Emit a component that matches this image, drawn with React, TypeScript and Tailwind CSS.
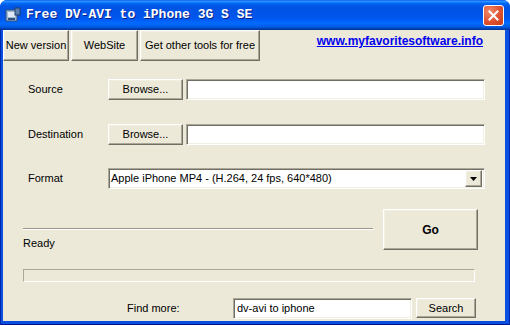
import type { ReactNode } from 'react';

// Classic XP-era 3D borders, reused on buttons and fields
const raised =
  'bg-[#ece9d8] border border-t-white border-l-white border-b-[#716f64] border-r-[#716f64] shadow-[inset_-1px_-1px_0_#aca899,inset_1px_1px_0_#f1efe2]';
const sunken =
  'bg-white border border-t-[#aca899] border-l-[#aca899] border-b-white border-r-white shadow-[inset_1px_1px_0_#716f64,inset_-1px_-1px_0_#f1efe2]';

function Btn({ className = '', children }: { className?: string; children: ReactNode }) {
  return (
    <button type="button" className={`${raised} flex items-center justify-center text-black ${className}`}>
      {children}
    </button>
  );
}

function TitleIcon() {
  return (
    <svg width="16" height="16" viewBox="0 0 16 16" className="shrink-0">
      <rect x="1" y="3" width="11" height="11" fill="#9fb8d8" stroke="#30507a" strokeWidth="1" />
      <rect x="3" y="5" width="7" height="5" fill="#dfe9f5" />
      <rect x="10" y="1" width="5" height="7" fill="#5b7fb0" stroke="#223f66" strokeWidth="1" />
      <rect x="3" y="11" width="7" height="2" fill="#30507a" />
    </svg>
  );
}

function CloseButton() {
  return (
    <div className="w-[21px] h-[21px] rounded-[3px] border border-white bg-[radial-gradient(circle_at_30%_30%,#f08a6c,#e0512f_55%,#c23b1c)] flex items-center justify-center">
      <svg width="11" height="11" viewBox="0 0 11 11">
        <path d="M1.5 1.5 L9.5 9.5 M9.5 1.5 L1.5 9.5" stroke="white" strokeWidth="2" strokeLinecap="square" />
      </svg>
    </div>
  );
}

export default function App() {
  return (
    <div className="w-[510px] h-[325px] flex flex-col bg-[#0a4fe0] rounded-t-[7px] overflow-hidden font-['Liberation_Sans',Arial,sans-serif] text-[11px] text-black">
      {/* title bar */}
      <div className="h-[30px] shrink-0 flex items-center pl-[5px] pr-[6px] bg-[linear-gradient(to_bottom,#0058ee_0%,#3593ff_4%,#288eff_6%,#127dff_8%,#036ffc_10%,#0262ee_14%,#0057e5_20%,#0054e3_24%,#0055eb_56%,#005bf5_66%,#026afe_76%,#0062ef_86%,#0052d6_92%,#0040ab_96%,#003092_100%)]">
        <TitleIcon />
        <span className="ml-[5px] font-['Liberation_Mono',monospace] font-bold text-[13px] text-white [text-shadow:1px_1px_0_#0a1f8a]">
          Free DV-AVI to iPhone 3G S SE
        </span>
        <div className="ml-auto">
          <CloseButton />
        </div>
      </div>

      {/* frame + client */}
      <div className="flex-1 flex pl-[3px] pr-[5px] pb-[4px] shadow-[inset_1px_0_0_#0027a8,inset_-1px_0_0_#0027a8,inset_0_-1px_0_#00138c]">
        <div className="flex-1 flex flex-col bg-[#ece9d8] pl-px">
          {/* toolbar */}
          <div className="h-[31px] flex items-start -ml-px">
            <Btn className="w-[66px] h-[31px]">New version</Btn>
            <Btn className="ml-[2px] w-[67px] h-[31px]">WebSite</Btn>
            <Btn className="ml-[2px] w-[120px] h-[31px]">Get other tools for free</Btn>
            <a className="ml-auto mr-[22px] mt-[4px] leading-[14px] text-[12px] font-bold text-[#0000ee] underline cursor-pointer">
              www.myfavoritesoftware.info
            </a>
          </div>

          {/* source */}
          <div className="mt-[18px] flex items-center pl-[24px]">
            <span className="w-[80px]">Source</span>
            <Btn className="w-[75px] h-[21px]">Browse...</Btn>
            <div className={`${sunken} ml-[3px] w-[299px] h-[21px]`} />
          </div>

          {/* destination */}
          <div className="mt-[24px] flex items-center pl-[24px]">
            <span className="w-[80px]">Destination</span>
            <Btn className="w-[75px] h-[21px]">Browse...</Btn>
            <div className={`${sunken} ml-[3px] w-[299px] h-[21px]`} />
          </div>

          {/* format */}
          <div className="mt-[23px] flex items-center pl-[24px]">
            <span className="w-[80px]">Format</span>
            <div className={`${sunken} w-[377px] h-[21px] flex items-center pl-[2px] pr-[2px]`}>
              <span className="flex-1">Apple iPhone MP4 - (H.264, 24 fps, 640*480)</span>
              <Btn className="w-[17px] h-[17px]">
                <svg width="7" height="4" viewBox="0 0 7 4">
                  <path d="M0 0 H7 L3.5 4 Z" fill="black" />
                </svg>
              </Btn>
            </div>
          </div>

          {/* status + go */}
          <div className="mt-[20px] flex pl-[19px] pr-[27px] h-[41px]">
            <div className="w-[350px] flex flex-col">
              <div className="mt-[19px] h-px bg-[#9a978a]" />
              <div className="h-px bg-white" />
              <span className="mt-[7px] leading-[13px]">Ready</span>
            </div>
            <Btn className="ml-auto w-[95px] h-[41px] font-bold text-[12px]">Go</Btn>
          </div>

          {/* progress */}
          <div className="mt-[19px] ml-[19px] w-[452px] h-[13px] border border-t-[#aca899] border-l-[#aca899] border-b-white border-r-white" />

          {/* find more */}
          <div className="mt-[16px] flex items-center">
            <span className="ml-[123px] w-[106px]">Find more:</span>
            <div className={`${sunken} w-[179px] h-[21px] flex items-center pl-[3px]`}>dv-avi to iphone</div>
            <Btn className="ml-[4px] w-[60px] h-[20px] self-start">Search</Btn>
          </div>
        </div>
      </div>
    </div>
  );
}
